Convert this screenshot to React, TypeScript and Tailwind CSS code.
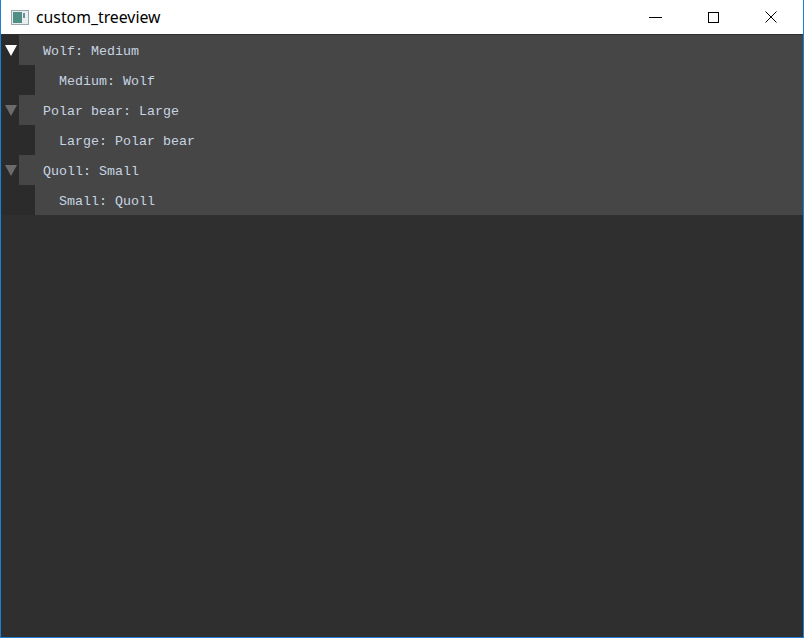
const rows = [
  { text: 'Wolf: Medium', level: 0, active: true },
  { text: 'Medium: Wolf', level: 1 },
  { text: 'Polar bear: Large', level: 0 },
  { text: 'Large: Polar bear', level: 1 },
  { text: 'Quoll: Small', level: 0 },
  { text: 'Small: Quoll', level: 1 },
]

function Triangle({ active }: { active?: boolean }) {
  return (
    <svg width="12" height="11" viewBox="0 0 12 11">
      <polygon points="0,0 12,0 6,11" fill={active ? '#ffffff' : '#6b6b6b'} />
    </svg>
  )
}

export default function App() {
  return (
    <div className="w-[804px] h-[638px] flex flex-col bg-white border-x border-b border-[#1c7fd4] overflow-hidden">
      <div className="h-[34px] flex items-center bg-white shrink-0">
        <svg width="18" height="15" viewBox="0 0 18 15" className="ml-[10px] mt-[1px]">
          <rect x="0.5" y="0.5" width="17" height="14" fill="#e9eef0" stroke="#9aa7ad" />
          <rect x="2" y="2" width="9" height="11" fill="#4f8f86" />
          <rect x="12" y="3" width="2" height="5" fill="#6b8f99" />
        </svg>
        <span className="ml-[7px] mt-[1px] text-[15.8px] text-black font-['Noto_Sans',sans-serif] leading-none">
          custom_treeview
        </span>
        <div className="ml-auto mr-[3px] flex items-center h-full">
          <div className="w-[58px] h-full flex items-center justify-center">
            <div className="w-[13px] h-px bg-black" />
          </div>
          <div className="w-[58px] h-full flex items-center justify-center">
            <div className="w-[11px] h-[11px] border border-black" />
          </div>
          <div className="w-[58px] h-full flex items-center justify-center">
            <svg width="12" height="12" viewBox="0 0 12 12">
              <path d="M0.5 0.5 L11.5 11.5 M11.5 0.5 L0.5 11.5" stroke="#000" strokeWidth="1" />
            </svg>
          </div>
        </div>
      </div>
      <div className="flex-1 bg-[#2f2f2f] pt-px pl-px">
        {rows.map((row, i) => (
          <div key={i} className="flex h-[30px]">
            {row.level === 0 ? (
              <div className="w-[17px] bg-[#2b2b2b] flex items-center justify-center pl-px">
                <Triangle active={row.active} />
              </div>
            ) : (
              <div className="w-[33px] bg-[#2b2b2b]" />
            )}
            <div className="flex-1 bg-[#464646] flex items-center pl-[24px] pt-[3px] font-['Liberation_Mono',monospace] text-[13.33px] text-[#c6d4e2]">
              <span className="whitespace-pre">{row.text}</span>
            </div>
          </div>
        ))}
      </div>
    </div>
  )
}
